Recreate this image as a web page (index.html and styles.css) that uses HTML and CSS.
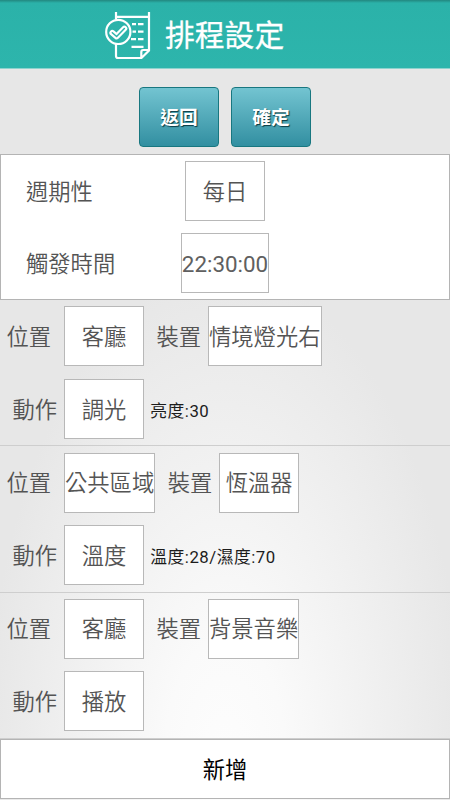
FILE: index.html
```html
<!DOCTYPE html>
<html lang="zh-Hant">
<head>
<meta charset="utf-8">
<meta name="viewport" content="width=device-width, initial-scale=1">
<title>排程設定</title>
<link rel="stylesheet" href="styles.css">
</head>
<body>
<header class="topbar">
  <svg class="logo" viewBox="0 0 50 52" width="50" height="52" fill="none" stroke="#fff" stroke-width="2.200">
    <path d="M12 3v7M45 3v38.500l-7.500 7.500H14q-2 0-2-2V35M12 7.800h33M37.300 49v-6q0-2 2-2H45"/>
    <circle cx="14.300" cy="22.900" r="12.100"/>
    <path d="M28 15.200h4M34 15.200h5.500M28.500 22.700h3.500M34 22.700h5.500M27 30.200h5M34 30.200h5.500M27.500 37.800h12"/>
    <g stroke-linecap="round" stroke-linejoin="round">
      <path stroke-width="5.800" d="M8.300 23.800l4.300 3.700 7.800-8"/>
      <path class="tick-core" stroke-width="1.500" d="M8.300 23.800l4.300 3.700 7.800-8"/>
    </g>
  </svg>
  <h1>排程設定</h1>
</header>
<div class="buttons"><button>返回</button><button>確定</button></div>
<section class="panel">
  <div class="setting"><span>週期性</span><div class="box">每日</div></div>
  <div class="setting"><span>觸發時間</span><div class="box time">22:30:00</div></div>
</section>
<main>
  <section class="group">
    <div class="row"><span class="label">位置</span><div class="box">客廳</div><span class="label device">裝置</span><div class="box">情境燈光右</div></div>
    <div class="row"><span class="label action">動作</span><div class="box">調光</div><span class="detail">亮度:30</span></div>
  </section>
  <section class="group">
    <div class="row"><span class="label">位置</span><div class="box">公共區域</div><span class="label device">裝置</span><div class="box">恆溫器</div></div>
    <div class="row"><span class="label action">動作</span><div class="box">溫度</div><span class="detail">溫度:28/濕度:70</span></div>
  </section>
  <section class="group">
    <div class="row"><span class="label">位置</span><div class="box">客廳</div><span class="label device">裝置</span><div class="box">背景音樂</div></div>
    <div class="row"><span class="label action">動作</span><div class="box">播放</div></div>
  </section>
</main>
<div class="add">新增</div>
</body>
</html>
```
FILE: styles.css
```css
* { box-sizing: border-box; }
body {
  margin: 0;
  width: 450px;
  height: 800px;
  overflow: hidden;
  display: flex;
  flex-direction: column;
  font: 350 22.3px/30px Roboto, "Noto Sans CJK TC", sans-serif;
  color: #545454;
  background: radial-gradient(ellipse 240px 490px at 225px 760px, #fdfdfd 0, #fafafa 25%, #e7e7e7 100%);
}
.topbar {
  flex: none;
  height: 69px;
  display: flex;
  align-items: center;
  padding-left: 104px;
  background: linear-gradient(#22877f 0, #2bb2a9 3px, #2db5ac 68px, #8ed3ce 68px);
}
.logo { flex: none; }
.tick-core { stroke: #2db5ac; }
h1 {
  margin: 2px 0 0 11px;
  color: #fff;
  font-size: 29.8px;
  font-weight: 400;
  line-height: 40px;
  -webkit-text-stroke: .3px #fff;
}
.buttons {
  flex: none;
  height: 85px;
  padding-top: 18px;
  display: flex;
  justify-content: center;
  gap: 12px;
}
button {
  width: 80px;
  height: 60px;
  padding: 1px 0 0;
  border: 1px solid #187780;
  border-radius: 4px;
  background: linear-gradient(#73c4d1, #328fa1);
  color: #fff;
  font: bold 18.7px/28px Roboto, "Noto Sans CJK TC", sans-serif;
  text-shadow: 1px 1px 1px #093a42;
}
.panel {
  flex: none;
  height: 146px;
  border: 1px solid #b4b4b4;
  background: #fff;
  padding-top: 6px;
}
.setting {
  display: grid;
  grid-template-columns: 1fr auto 1fr;
  align-items: center;
  height: 60px;
  margin-bottom: 12px;
}
.setting span { padding: 1px 0 0 25px; }
.box {
  display: flex;
  align-items: center;
  justify-content: center;
  min-width: 80px;
  height: 60px;
  padding-top: 1px;
  border: 1px solid #b8b8b8;
  background: #fff;
  white-space: nowrap;
}
.time { font-size: 22.4px; font-weight: 400; color: #606060; }
main { flex: none; height: 439px; }
.group {
  height: 146.3px;
  padding-top: 6.4px;
  border-bottom: 1px solid #cecece;
}
.row { display: flex; align-items: center; height: 60px; margin-bottom: 12.5px; }
.label { width: 57.5px; margin-left: 6.5px; padding-top: 1px; }
.label.action { width: 51.5px; margin-left: 12.5px; padding-top: 2px; }
.action + .box { padding-top: 2px; }
.label.device { width: 51.5px; margin-left: 12.5px; }
.detail { margin-left: 6.3px; padding-top: 4px; font-size: 16.8px; font-weight: 400; letter-spacing: .5px; color: #1c1c1c; }
.add {
  flex: none;
  height: 60px;
  display: flex;
  align-items: center;
  justify-content: center;
  padding-top: 1px;
  border: 1px solid #b4b4b4;
  background: #fff;
  color: #000;
  font-weight: 400;
}
```
